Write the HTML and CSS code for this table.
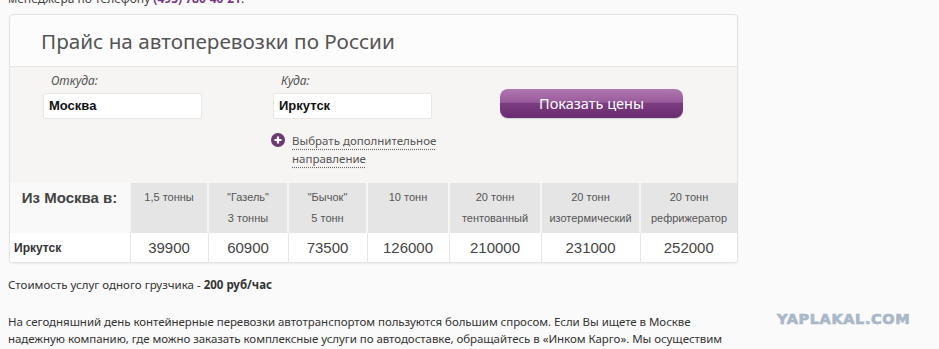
FILE: index.html
```html
<!DOCTYPE html>
<html lang="ru">
<head>
<meta charset="utf-8">
<link rel="stylesheet" href="styles.css">
</head>
<body>
<div class="page">
  <p class="topline">менеджера по телефону <b class="phone">(495) 780-40-21</b>.</p>

  <div class="calc">
    <div class="calc-head">Прайс на автоперевозки по России</div>
    <div class="calc-form">
      <div class="field">
        <div class="label">Откуда:</div>
        <div class="input">Москва</div>
      </div>
      <div class="field field-to">
        <div class="label">Куда:</div>
        <div class="input">Иркутск</div>
        <div class="more">
          <svg class="plus" width="14" height="14" viewBox="0 0 14 14"><circle cx="7" cy="7" r="7" fill="#6a3a70"/><path d="M7 3.5v7M3.5 7h7" stroke="#fff" stroke-width="2.2"/></svg>
          <span class="more-link">Выбрать дополнительное<br>направление</span>
        </div>
      </div>
      <div class="btn">Показать цены</div>
    </div>
    <table class="prices">
      <colgroup>
        <col style="width:120px"><col style="width:78px"><col style="width:80px"><col style="width:79px"><col style="width:82px"><col style="width:92px"><col style="width:99px"><col style="width:97px">
      </colgroup>
      <tr class="hrow">
        <th class="from">Из Москва в:</th>
        <th>1,5 тонны</th>
        <th>"Газель"<br>3 тонны</th>
        <th>"Бычок"<br>5 тонн</th>
        <th>10 тонн</th>
        <th>20 тонн<br>тентованный</th>
        <th>20 тонн<br>изотермический</th>
        <th>20 тонн<br>рефрижератор</th>
      </tr>
      <tr class="brow">
        <td class="city">Иркутск</td>
        <td>39900</td>
        <td>60900</td>
        <td>73500</td>
        <td>126000</td>
        <td>210000</td>
        <td>231000</td>
        <td>252000</td>
      </tr>
    </table>
  </div>

  <p class="loader">Стоимость услуг одного грузчика - <b>200 руб/час</b></p>
  <p class="text">На сегодняшний день контейнерные перевозки автотранспортом пользуются большим спросом. Если Вы ищете в Москве<br>надежную компанию, где можно заказать комплексные услуги по автодоставке, обращайтесь в «Инком Карго». Мы осуществим</p>
</div>
<div class="watermark">YAPLAKAL.COM</div>
</body>
</html>
```

FILE: styles.css
```css
html, body {
  margin: 0;
  padding: 0;
  background: #fafafa;
}
body {
  font-family: "Noto Sans", "Open Sans", sans-serif;
  color: #333;
  width: 939px;
  height: 349px;
  overflow: hidden;
  position: relative;
}
.page {
  padding-left: 8px;
  width: 740px;
}
.topline {
  margin: -9px 0 0 0;
  font-size: 12px;
  line-height: 16px;
  color: #444;
}
.phone {
  color: #7a3a82;
}
.calc {
  margin: 7px 0 0 1px;
  width: 727px;
  border: 1px solid #e2e2e2;
  border-radius: 4px;
  background: #fcfcfc;
  box-shadow: 0 1px 2px rgba(0,0,0,0.06);
  overflow: hidden;
}
.calc-head {
  height: 52px;
  box-sizing: border-box;
  padding: 12px 0 0 31px;
  font-size: 20.7px;
  line-height: 28px;
  color: #555;
  border-bottom: 1px solid #e6e6e6;
}
.calc-form {
  height: 116px;
  box-sizing: border-box;
  background: #f7f4f4;
  display: flex;
  padding: 6px 0 0 33px;
}
.field {
  width: 159px;
}
.field-to {
  margin-left: 71px;
}
.label {
  font-size: 12px;
  font-style: italic;
  color: #555;
  line-height: 16px;
  padding-left: 8px;
  margin-bottom: 4px;
}
.input {
  height: 26px;
  box-sizing: border-box;
  background: #fff;
  border: 1px solid #ebe6e6;
  border-radius: 2px;
  font-family: "Liberation Sans", Arial, sans-serif;
  font-weight: bold;
  font-size: 13px;
  line-height: 24px;
  padding-left: 5px;
  color: #111;
}
.more {
  display: flex;
  margin-top: 13px;
  margin-left: -2px;
}
.plus {
  flex: none;
  margin-top: 1px;
  margin-right: 7px;
}
.more-link {
  font-size: 11.5px;
  line-height: 18px;
  color: #555;
  white-space: nowrap;
  text-decoration: underline dotted #666;
  text-underline-offset: 4px;
}
.btn {
  margin-left: 68px;
  margin-top: 16px;
  width: 183px;
  height: 29px;
  border-radius: 8px;
  background: linear-gradient(to bottom, #b077b0 0%, #9a5c9c 45%, #7b3c80 50%, #6a2c70 100%);
  box-shadow: 0 1px 1px rgba(0,0,0,0.15);
  color: #fff;
  font-size: 14.5px;
  line-height: 28px;
  text-align: center;
}
.prices {
  border-collapse: collapse;
  table-layout: fixed;
  width: 727px;
  font-family: "Liberation Sans", Arial, sans-serif;
}
.hrow th {
  height: 50px;
  box-sizing: border-box;
  vertical-align: top;
  background: #e5e5e5;
  font-weight: normal;
  font-size: 11px;
  line-height: 21px;
  color: #555;
  padding: 4px 0 0 0;
  border-left: 2px solid #f5f5f5;
}
.hrow th.from {
  background: #f9f9f9;
  border-left: none;
  font-weight: bold;
  font-size: 15px;
  color: #444;
  line-height: 21px;
}
.brow td {
  height: 29px;
  background: #fff;
  text-align: center;
  font-size: 15px;
  color: #444;
  padding: 0;
  border-left: 1px solid #e6e6e6;
}
.brow td.city {
  text-align: left;
  border-left: none;
  font-weight: bold;
  font-size: 12px;
  padding-left: 4px;
  color: #333;
}
.loader {
  margin: 14px 0 0 0;
  font-size: 11.5px;
  line-height: 16px;
  color: #333;
}
.text {
  margin: 20px 0 0 0;
  font-size: 11.5px;
  letter-spacing: -0.05px;
  line-height: 17px;
  color: #333;
  white-space: nowrap;
}
.watermark {
  position: absolute;
  left: 777px;
  top: 311px;
  font-family: "DejaVu Sans", sans-serif;
  font-weight: bold;
  font-size: 14.5px;
  letter-spacing: 0.6px;
  -webkit-text-stroke: 0.7px #a9b7c8;
  color: #a9b7c8;
}
```
